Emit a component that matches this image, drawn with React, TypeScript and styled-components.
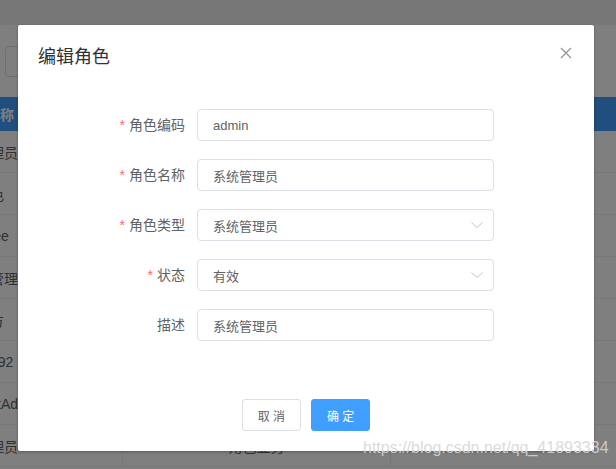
import React from 'react';
import styled, {createGlobalStyle} from 'styled-components';

const GlobalStyle = createGlobalStyle`
  html, body {
    margin: 0;
    padding: 0;
    background: #ffffff;
  }
  body {
    font-family: 'Liberation Sans', 'Noto Sans CJK SC', sans-serif;
  }
`;

const roles = [
  {name: '系统管理员', desc: ''},
  {name: '默认角色', desc: ''},
  {name: 'employee', desc: ''},
  {name: '业务员管理', desc: ''},
  {name: '数据万方', desc: ''},
  {name: 'testuser92', desc: ''},
  {name: 'userTestAdmin', desc: ''},
  {name: '系统管理员', desc: '角色业务'},
];

const fields = [
  {label: '角色编码', value: 'admin', required: true, select: false},
  {label: '角色名称', value: '系统管理员', required: true, select: false},
  {label: '角色类型', value: '系统管理员', required: true, select: true},
  {label: '状态', value: '有效', required: true, select: true},
  {label: '描述', value: '系统管理员', required: false, select: false},
];

export default function App() {
  return (
    <>
      <GlobalStyle />
      <Page>
        <TopBar />
        <Toolbar>
          <SearchBox />
        </Toolbar>

        <TableWrap>
          <HeaderRow>
            <HeaderCell>角色名称</HeaderCell>
            <HeaderCell $center>角色类型</HeaderCell>
            <HeaderCell $center>描述</HeaderCell>
          </HeaderRow>
          {roles.map((r, i) => (
            <BodyRow key={i}>
              <BodyCell>{r.name}</BodyCell>
              <BodyCell $center>{r.desc}</BodyCell>
              <BodyCell $center />
            </BodyRow>
          ))}
        </TableWrap>

        <Overlay />

        <Dialog>
          <DialogHeader>
            <DialogTitle>编辑角色</DialogTitle>
            <CloseButton aria-label='close'>
              <svg width='16' height='16' viewBox='0 0 16 16'>
                <path
                  d='M3 3 L13 13 M13 3 L3 13'
                  stroke='#909399'
                  strokeWidth='1.2'
                  fill='none'
                />
              </svg>
            </CloseButton>
          </DialogHeader>

          <DialogBody>
            {fields.map((f) => (
              <FormItem key={f.label}>
                <Label $required={f.required}>{f.label}</Label>
                <Field>
                  <Input readOnly defaultValue={f.value} $select={f.select} />
                  {f.select && (
                    <Arrow width='12' height='12' viewBox='0 0 12 12'>
                      <path
                        d='M0.5 3.5 L6 8.5 L11.5 3.5'
                        stroke='#C0C4CC'
                        strokeWidth='1'
                        fill='none'
                      />
                    </Arrow>
                  )}
                </Field>
              </FormItem>
            ))}
          </DialogBody>

          <DialogFooter>
            <Button>取 消</Button>
            <Button $primary>确 定</Button>
          </DialogFooter>
        </Dialog>

        <Watermark>https://blog.csdn.net/qq_41893334</Watermark>
      </Page>
    </>
  );
}

const Page = styled.div`
  position: relative;
  width: 616px;
  height: 469px;
  overflow: hidden;
  background: #ffffff;
`;

const TopBar = styled.div`
  height: 25px;
  background: #eeeeee;
`;

const Toolbar = styled.div`
  padding: 21px 0 20px 5px;
`;

const SearchBox = styled.div`
  width: 200px;
  height: 31px;
  box-sizing: border-box;
  border: 1px solid #dcdfe6;
  border-radius: 4px;
`;

const TableWrap = styled.div`
  margin-left: -60px;
  width: 700px;
`;

const HeaderRow = styled.div`
  display: grid;
  grid-template-columns: 183px 268px 1fr;
  height: 34px;
  background: #409eff;
`;

const HeaderCell = styled.div<{$center?: boolean}>`
  display: flex;
  align-items: center;
  justify-content: ${(p) => (p.$center ? 'center' : 'flex-start')};
  padding-left: ${(p) => (p.$center ? '0' : '18px')};
  font-size: 14px;
  font-weight: bold;
  color: #ffffff;
  white-space: nowrap;
`;

const BodyRow = styled.div`
  display: grid;
  grid-template-columns: 183px 268px 1fr;
  height: 42px;
  border-bottom: 1px solid #ebeef5;
  box-sizing: border-box;
`;

const BodyCell = styled.div<{$center?: boolean}>`
  display: flex;
  align-items: center;
  justify-content: ${(p) => (p.$center ? 'center' : 'flex-start')};
  padding-left: ${(p) => (p.$center ? '0' : '8px')};
  border-right: 1px solid #ebeef5;
  font-size: 14px;
  color: #606266;
  white-space: nowrap;
`;

const Overlay = styled.div`
  position: absolute;
  inset: 0;
  background: rgba(0, 0, 0, 0.5);
`;

const Dialog = styled.div`
  position: absolute;
  left: 18px;
  top: 25px;
  width: 576px;
  background: #ffffff;
  border-radius: 2px;
  box-shadow: 0 1px 3px rgba(0, 0, 0, 0.3);
`;

const DialogHeader = styled.div`
  position: relative;
  padding: 20px 20px 10px;
`;

const DialogTitle = styled.span`
  display: block;
  font-size: 18px;
  line-height: 24px;
  color: #303133;
`;

const CloseButton = styled.button`
  position: absolute;
  top: 20px;
  right: 20px;
  width: 16px;
  height: 16px;
  padding: 0;
  border: none;
  background: none;
  display: flex;
`;

const DialogBody = styled.div`
  padding: 30px 20px;
`;

const FormItem = styled.div`
  display: flex;
  align-items: center;
  margin-bottom: 18px;
`;

const Label = styled.label<{$required?: boolean}>`
  width: 159px;
  box-sizing: border-box;
  padding-right: 12px;
  text-align: right;
  font-size: 14px;
  line-height: 32px;
  color: #606266;

  &::before {
    content: ${(p) => (p.$required ? "'*'" : 'none')};
    color: #f56c6c;
    margin-right: 4px;
  }
`;

const Field = styled.div`
  position: relative;
  width: 297px;
  height: 32px;
`;

const Input = styled.input<{$select?: boolean}>`
  width: 100%;
  height: 32px;
  box-sizing: border-box;
  border: 1px solid #dcdfe6;
  border-radius: 4px;
  padding: 0 ${(p) => (p.$select ? '30px' : '15px')} 0 15px;
  font-family: inherit;
  font-size: 13px;
  color: #606266;
  background: #ffffff;
  outline: none;
`;

const Arrow = styled.svg`
  position: absolute;
  right: 11px;
  top: 10px;
`;

const DialogFooter = styled.div`
  display: flex;
  justify-content: center;
  gap: 10px;
  padding: 10px 20px 20px;
`;

const Button = styled.button<{$primary?: boolean}>`
  height: 32px;
  padding: 0 15px;
  border-radius: 3px;
  border: 1px solid ${(p) => (p.$primary ? '#409eff' : '#dcdfe6')};
  background: ${(p) => (p.$primary ? '#409eff' : '#ffffff')};
  color: ${(p) => (p.$primary ? '#ffffff' : '#606266')};
  font-family: inherit;
  font-size: 12px;
  white-space: pre;
`;

const Watermark = styled.div`
  position: absolute;
  left: 363px;
  top: 439px;
  font-family: 'Liberation Sans', Arial, sans-serif;
  font-size: 16px;
  line-height: 18px;
  color: rgba(214, 214, 214, 0.9);
  white-space: nowrap;
  pointer-events: none;
`;
